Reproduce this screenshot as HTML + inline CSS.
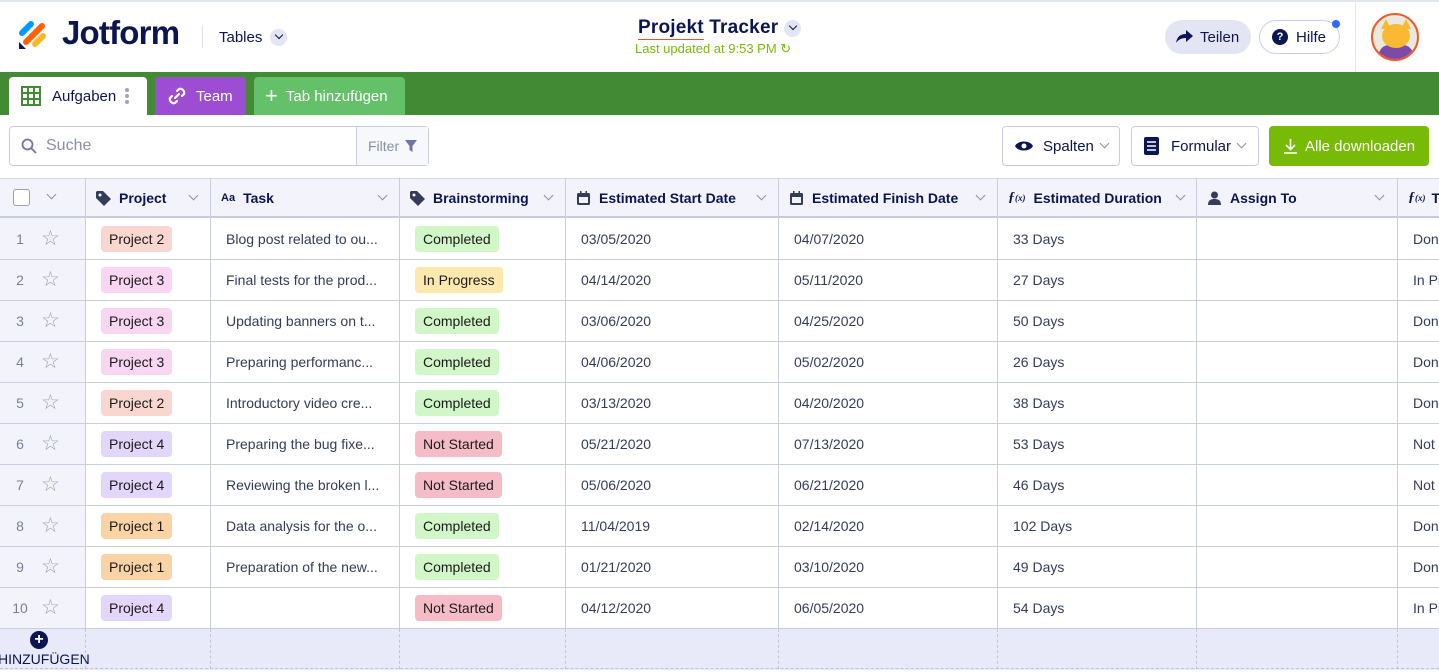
<!DOCTYPE html>
<html><head><meta charset="utf-8"><style>
*{box-sizing:border-box;margin:0;padding:0}
body{width:1439px;height:672px;overflow:hidden;background:#fff;font-family:"Liberation Sans",sans-serif;color:#0a1551;position:relative}
.a{position:absolute}
.top{left:0;top:0;width:1439px;height:72px;border-top:2px solid #e3e5ec;background:#fff}
.green{left:0;top:72px;width:1439px;height:43px;background:#438a35}
.tab{top:77px;height:38px;border-radius:4px 4px 0 0;display:flex;align-items:center;font-size:15px}
.btn{top:126px;height:40px;border:1px solid #c8ccdc;border-radius:4px;display:flex;align-items:center;font-size:15px;background:#fff}
.hdr{left:0;top:178px;width:1439px;height:40px;background:#f3f4fb;border-top:1px solid #d3d7e6;border-bottom:2px solid #c8ccda}
.vl{top:178px;width:1px;height:450px;background:#c8cedd}
.hl{left:0;width:1439px;height:1px;background:#c8cedd}
.hc{top:178px;height:40px;display:flex;align-items:center;font-size:14px;font-weight:bold;color:#0a1551;white-space:nowrap}
.car{position:absolute;width:7px;height:7px;border-right:1.5px solid #8b90a8;border-bottom:1.5px solid #8b90a8;transform:rotate(45deg)}
.cell{font-size:14px;color:#343c5a;display:flex;align-items:center;height:41px;white-space:nowrap;overflow:hidden}
.b{display:inline-block;padding:5px 8px;border-radius:4px;font-size:14px;color:#1a1a1a}
.p1{background:#fbd3a5}.p2{background:#f9d7d0}.p3{background:#f8d6f1}.p4{background:#e2d6fa}
.c{background:#d1f6c7}.ip{background:#fde9ad}.ns{background:#f5bcc7}
.rn{font-size:14px;color:#7a8099;width:40px;text-align:center}
</style></head><body>
<div class="a top"></div>
<svg class="a" style="left:18px;top:18px" width="32" height="32" viewBox="0 0 32 32">
<line x1="4" y1="15" x2="13" y2="6" stroke="#0099ff" stroke-width="6" stroke-linecap="round"/>
<line x1="8" y1="24" x2="24" y2="8" stroke="#ff6100" stroke-width="6" stroke-linecap="round"/>
<line x1="17" y1="26" x2="25" y2="18" stroke="#ffb629" stroke-width="6" stroke-linecap="round"/>
<path d="M1 24 L1 31 L8 31 Z" fill="#0a1551"/>
</svg>
<div class="a" style="left:62px;top:14px;font-size:33px;font-weight:bold;letter-spacing:-0.8px">Jotform</div>
<div class="a" style="left:202px;top:26px;width:1px;height:22px;background:#dfe1ea"></div>
<div class="a" style="left:219px;top:29px;font-size:15px">Tables</div>
<div class="a" style="left:270px;top:29px;width:17px;height:17px;border-radius:50%;background:#e3e5f3"></div>
<div class="a" style="left:276px;top:32px;width:6px;height:6px;border-right:1.5px solid #0a1551;border-bottom:1.5px solid #0a1551;transform:rotate(45deg)"></div>
<div class="a" style="left:638px;top:17px;font-size:19px;font-weight:bold;letter-spacing:0.2px">Projekt Tracker</div>
<div class="a" style="left:638px;top:39px;width:66px;height:1px;background:#e4572e"></div>
<div class="a" style="left:784px;top:20px;width:17px;height:17px;border-radius:50%;background:#e3e5f3"></div>
<div class="a" style="left:790px;top:23px;width:6px;height:6px;border-right:1.5px solid #0a1551;border-bottom:1.5px solid #0a1551;transform:rotate(45deg)"></div>
<div class="a" style="left:635px;top:41px;font-size:13px;color:#78bb07">Last updated at 9:53 PM ↻</div>
<div class="a" style="left:1165px;top:20px;width:86px;height:34px;border-radius:17px;background:#e3e5f3;font-size:15px;display:flex;align-items:center;padding-left:35px">Teilen</div>
<svg class="a" style="left:1176px;top:30px" width="17" height="14" viewBox="0 0 17 14"><path d="M10 0 L17 6 L10 12 L10 8 C5 8 2 10 0 13 C1 7 4 4 10 4Z" fill="#0a1551"/></svg>
<div class="a" style="left:1259px;top:20px;width:81px;height:34px;border-radius:17px;border:1px solid #c8cdf0;background:#fff;font-size:15px;display:flex;align-items:center;padding-left:36px">Hilfe</div>
<div class="a" style="left:1272px;top:29px;width:16px;height:16px;border-radius:50%;background:#0a1551;color:#fff;font-size:11px;font-weight:bold;text-align:center;line-height:16px">?</div>
<div class="a" style="left:1332px;top:20px;width:8px;height:8px;border-radius:50%;background:#2e69ff"></div>
<div class="a" style="left:1355px;top:2px;width:1px;height:70px;background:#e3e5ec"></div>
<div class="a" style="left:1371px;top:13px;width:48px;height:48px;border-radius:50%;border:2px solid #f05a28;background:#e9eadf;overflow:hidden">
<div class="a" style="left:6px;top:30px;width:34px;height:20px;border-radius:10px 10px 0 0;background:#7c4aa8"></div>
<div class="a" style="left:9px;top:9px;width:28px;height:24px;border-radius:50%;background:#f9b932"></div>
<div class="a" style="left:8px;top:4px;width:0;height:0;border-left:5px solid transparent;border-right:5px solid transparent;border-bottom:10px solid #f9b932"></div>
<div class="a" style="left:28px;top:4px;width:0;height:0;border-left:5px solid transparent;border-right:5px solid transparent;border-bottom:10px solid #f9b932"></div>
</div>
<div class="a green"></div>
<div class="a tab" style="left:9px;width:138px;background:#fff;color:#0a1551">
<svg style="margin-left:12px" width="20" height="20" viewBox="0 0 20 20"><rect x="1" y="1" width="18" height="18" fill="none" stroke="#438a35" stroke-width="2"/><path d="M1 7H19M1 13H19M7 1V19M13 1V19" stroke="#438a35" stroke-width="2"/></svg>
<span style="margin-left:11px">Aufgaben</span>
<svg style="margin-left:9px" width="4" height="16" viewBox="0 0 4 16"><circle cx="2" cy="2" r="2" fill="#a0a4b8"/><circle cx="2" cy="8" r="2" fill="#a0a4b8"/><circle cx="2" cy="14" r="2" fill="#a0a4b8"/></svg></div>
<div class="a tab" style="left:155px;width:91px;background:#9c4dd3;color:#fff">
<svg style="margin-left:11px" width="22" height="22" viewBox="0 0 22 22"><g fill="none" stroke="#fff" stroke-width="2.2" stroke-linecap="round"><path d="M9 13L13 9"/><path d="M11 6L13 4A4 4 0 0 1 18 9L16 11"/><path d="M11 16L9 18A4 4 0 0 1 4 13L6 11"/></g></svg>
<span style="margin-left:8px">Team</span></div>
<div class="a tab" style="left:254px;width:151px;background:#64c069;color:#fff"><span style="margin-left:11px;font-size:22px;line-height:20px">+</span><span style="margin-left:8px">Tab hinzufügen</span></div>
<div class="a btn" style="left:9px;width:420px;"></div>
<svg class="a" style="left:21px;top:138px" width="16" height="16" viewBox="0 0 16 16"><circle cx="6.5" cy="6.5" r="5" fill="none" stroke="#6f76a7" stroke-width="1.8"/><path d="M10 10L15 15" stroke="#6f76a7" stroke-width="1.8"/></svg>
<div class="a" style="left:46px;top:137px;font-size:16px;color:#8a8fa8">Suche</div>
<div class="a" style="left:356px;top:127px;width:72px;height:38px;border-left:1px solid #c8ccdc;background:#f7f8fc;font-size:14px;color:#8a8fa8;padding:11px 0 0 11px">Filter</div>
<svg class="a" style="left:405px;top:140px" width="12" height="12" viewBox="0 0 12 12"><path d="M0 0H12L7.5 6V12L4.5 10V6Z" fill="#6f76a7"/></svg>
<div class="a btn" style="left:1002px;width:118px"><svg style="margin-left:12px" width="18" height="12" viewBox="0 0 18 12"><path d="M0 6C3 0 15 0 18 6C15 12 3 12 0 6Z" fill="#0a1551"/><circle cx="9" cy="6" r="2.5" fill="#fff"/></svg><span style="margin-left:10px">Spalten</span></div>
<div class="car" style="left:1101px;top:140px"></div>
<div class="a btn" style="left:1131px;width:128px"><svg style="margin-left:12px" width="15" height="18" viewBox="0 0 15 18"><rect width="15" height="18" rx="2" fill="#0a1551"/><path d="M3 5H12M3 9H12M3 13H12" stroke="#fff" stroke-width="1.6"/></svg><span style="margin-left:12px">Formular</span></div>
<div class="car" style="left:1238px;top:140px"></div>
<div class="a btn" style="left:1269px;width:160px;background:#78bb07;border-color:#78bb07;color:#fff"><svg style="margin-left:14px" width="13" height="15" viewBox="0 0 13 15"><path d="M6.5 0V10M2 6L6.5 10.5L11 6M0 14H13" stroke="#fff" stroke-width="1.6" fill="none"/></svg><span style="margin-left:8px">Alle downloaden</span></div>
<div class="a hdr"></div>
<div class="a" style="left:0;top:218px;width:85px;height:410px;background:#f3f4fb"></div>
<div class="a" style="left:0;top:628px;width:1439px;height:42px;background:#e8eafa"></div>
<div class="a" style="left:13px;top:189px;width:17px;height:17px;border:1.5px solid #9aa0b8;border-radius:3px;background:#fff"></div>
<div class="car" style="left:48px;top:191px"></div>
<div id="lines"></div>
<div class="a hc" style="left:96px"><svg width="15" height="15" viewBox="0 0 15 15"><path d="M0 1V7L8 15L15 8L7 0H1Z" fill="#343c5a"/><circle cx="4" cy="4" r="1.5" fill="#f3f4fb"/></svg><span style="margin-left:8px">Project</span></div>
<div class="car" style="left:190px;top:192px"></div>
<div class="a hc" style="left:221px"><span style="font-size:11px">Aa</span><span style="margin-left:8px">Task</span></div>
<div class="car" style="left:379px;top:192px"></div>
<div class="a hc" style="left:410px"><svg width="15" height="15" viewBox="0 0 15 15"><path d="M0 1V7L8 15L15 8L7 0H1Z" fill="#343c5a"/><circle cx="4" cy="4" r="1.5" fill="#f3f4fb"/></svg><span style="margin-left:8px">Brainstorming</span></div>
<div class="car" style="left:545px;top:192px"></div>
<div class="a hc" style="left:577px"><svg width="13" height="14" viewBox="0 0 13 14"><rect y="2" width="13" height="12" rx="1.5" fill="#343c5a"/><rect x="3" y="0" width="1.5" height="3" fill="#343c5a"/><rect x="8.5" y="0" width="1.5" height="3" fill="#343c5a"/><rect x="2" y="6" width="9" height="6" fill="#f3f4fb"/></svg><span style="margin-left:9px">Estimated Start Date</span></div>
<div class="car" style="left:758px;top:192px"></div>
<div class="a hc" style="left:790px"><svg width="13" height="14" viewBox="0 0 13 14"><rect y="2" width="13" height="12" rx="1.5" fill="#343c5a"/><rect x="3" y="0" width="1.5" height="3" fill="#343c5a"/><rect x="8.5" y="0" width="1.5" height="3" fill="#343c5a"/><rect x="2" y="6" width="9" height="6" fill="#f3f4fb"/></svg><span style="margin-left:9px">Estimated Finish Date</span></div>
<div class="car" style="left:977px;top:192px"></div>
<div class="a hc" style="left:1008px"><span style="font-family:'Liberation Serif',serif;font-style:italic;font-size:14px">ƒ<span style="font-size:9px">(x)</span></span><span style="margin-left:8px">Estimated Duration</span></div>
<div class="car" style="left:1177px;top:192px"></div>
<div class="a hc" style="left:1208px"><svg width="13" height="14" viewBox="0 0 13 14"><circle cx="6.5" cy="4" r="3.5" fill="#343c5a"/><path d="M0 14C0 9 3 8 6.5 8S13 9 13 14Z" fill="#343c5a"/></svg><span style="margin-left:9px">Assign To</span></div>
<div class="car" style="left:1376px;top:192px"></div>
<div class="a hc" style="left:1408px"><span style="font-family:'Liberation Serif',serif;font-style:italic;font-size:14px">ƒ<span style="font-size:9px">(x)</span></span><span style="margin-left:6px">T</span></div>
<div id="rows"></div>
<div class="a" style="left:30px;top:631px;width:18px;height:18px;border-radius:50%;background:#0a1551;color:#fff;font-size:16px;font-weight:bold;text-align:center;line-height:17px">+</div>
<div class="a" style="left:-2px;top:651px;font-size:14px;color:#0a1551">HINZUFÜGEN</div>
<script>
var cols=[85,210,399,565,778,997,1196,1397];
var L='';
cols.forEach(function(x){L+='<div class="a vl" style="left:'+x+'px"></div>';});
for(var i=1;i<=10;i++){L+='<div class="a hl" style="top:'+(218+41*i)+'px"></div>';}
document.getElementById('lines').innerHTML=L;
var d=[
['2','Blog post related to ou...','c','Completed','03/05/2020','04/07/2020','33 Days','Done'],
['3','Final tests for the prod...','ip','In Progress','04/14/2020','05/11/2020','27 Days','In Progress'],
['3','Updating banners on t...','c','Completed','03/06/2020','04/25/2020','50 Days','Done'],
['3','Preparing performanc...','c','Completed','04/06/2020','05/02/2020','26 Days','Done'],
['2','Introductory video cre...','c','Completed','03/13/2020','04/20/2020','38 Days','Done'],
['4','Preparing the bug fixe...','ns','Not Started','05/21/2020','07/13/2020','53 Days','Not Started'],
['4','Reviewing the broken l...','ns','Not Started','05/06/2020','06/21/2020','46 Days','Not Started'],
['1','Data analysis for the o...','c','Completed','11/04/2019','02/14/2020','102 Days','Done'],
['1','Preparation of the new...','c','Completed','01/21/2020','03/10/2020','49 Days','Done'],
['4','','ns','Not Started','04/12/2020','06/05/2020','54 Days','In Progress']];
var h='';
d.forEach(function(r,i){var t=218+41*i;
h+='<div class="a cell rn" style="left:0;top:'+t+'px;justify-content:center">'+(i+1)+'</div>';
h+='<div class="a cell" style="left:41px;top:'+t+'px;font-size:21px;color:#9aa0b8">☆</div>';
h+='<div class="a cell" style="left:101px;top:'+t+'px"><span class="b p'+r[0]+'">Project '+r[0]+'</span></div>';
h+='<div class="a cell" style="left:226px;top:'+t+'px">'+r[1]+'</div>';
h+='<div class="a cell" style="left:415px;top:'+t+'px"><span class="b '+r[2]+'">'+r[3]+'</span></div>';
h+='<div class="a cell" style="left:581px;top:'+t+'px">'+r[4]+'</div>';
h+='<div class="a cell" style="left:794px;top:'+t+'px">'+r[5]+'</div>';
h+='<div class="a cell" style="left:1013px;top:'+t+'px">'+r[6]+'</div>';
h+='<div class="a cell" style="left:1413px;top:'+t+'px;width:60px">'+r[7]+'</div>';});
cols.forEach(function(x){h+='<div class="a" style="left:'+x+'px;top:629px;height:40px;border-left:1px dashed #c0c4d4"></div>';});
h+='<div class="a" style="left:0;top:668px;width:1439px;border-top:1px dashed #c0c4d4"></div>';
document.getElementById('rows').innerHTML=h;
</script>
</body></html>
